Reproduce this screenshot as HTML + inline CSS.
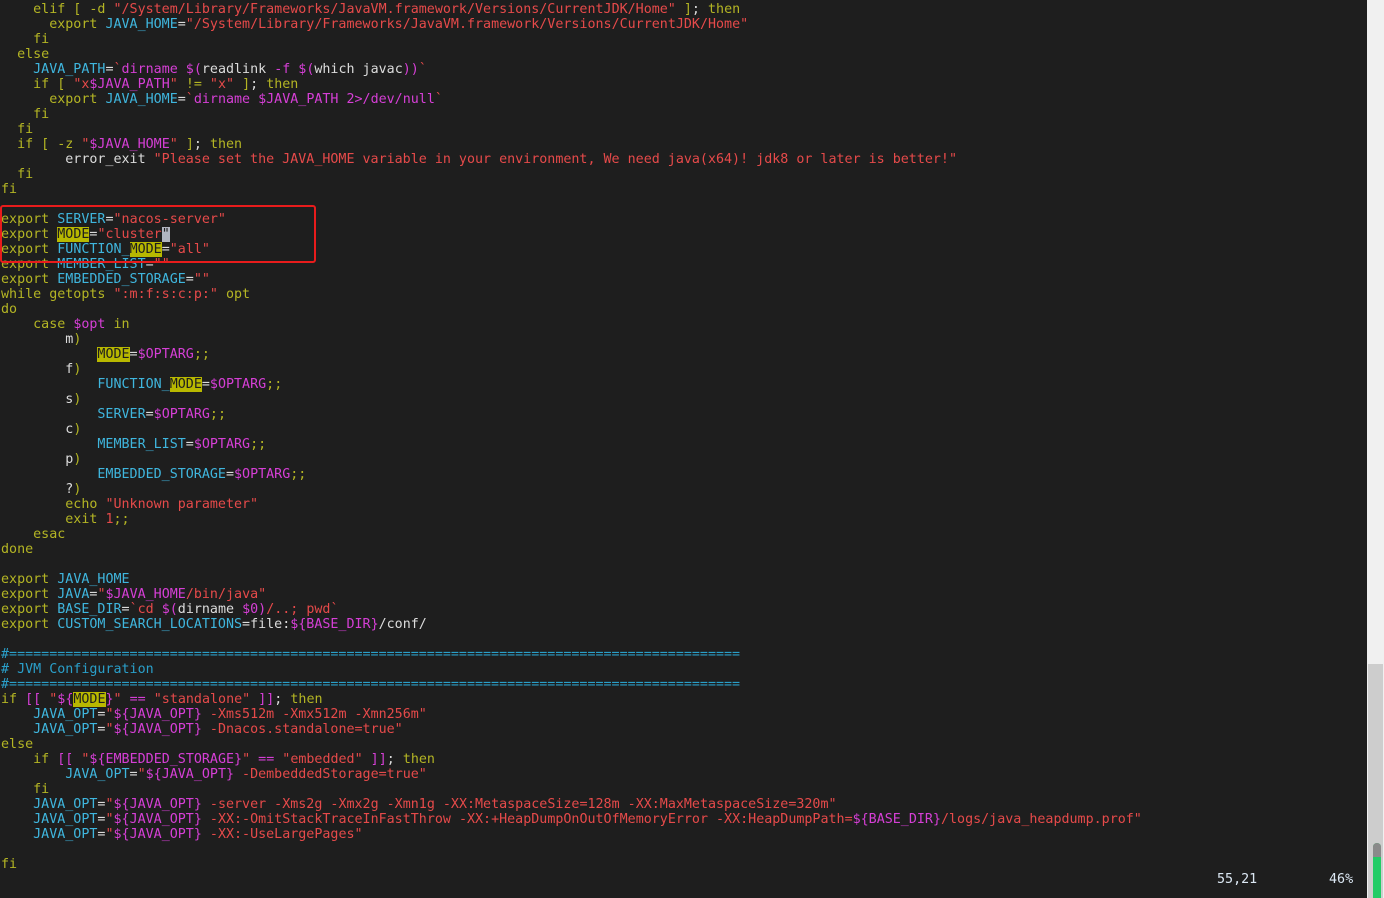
<!DOCTYPE html>
<html><head><meta charset="utf-8">
<style>
html,body{margin:0;padding:0;background:#1e1e1e;width:1384px;height:898px;overflow:hidden}
pre{margin:0;position:absolute;left:1px;top:2px;font-family:"DejaVu Sans Mono","Liberation Mono",monospace;font-size:13.35px;line-height:15px;color:#dcdcdc;white-space:pre}
.k{color:#b4b524}.v{color:#3fb6de}.s{color:#e64a4a}.m{color:#d63fd6}.c{color:#2a9fc9}
.h{background:#b8b800;color:#1e1e1e}
.cur{background:#b0b4c0;color:#1e1e1e}
#box{position:absolute;left:0;top:205px;width:312px;height:54px;border:2px solid #e81c1c;border-radius:3px}
#sb{position:absolute;left:1367px;top:0;width:17px;height:898px;background:#f0f0f0}
#sb2{position:absolute;left:1368px;top:664px;width:15px;height:234px;background:#cdcdcd}
#th{position:absolute;left:1373px;top:843px;width:8px;height:55px;background:#22cc66;border-radius:4px 4px 0 0}
#th2{position:absolute;left:1373px;top:843px;width:8px;height:14px;background:#8a8a8a;border-radius:4px 4px 0 0}
.st{position:absolute;top:872px;font-family:"DejaVu Sans Mono","Liberation Mono",monospace;font-size:13.35px;line-height:15px;color:#dce8f4}
</style></head><body>
<pre><span class="k">    elif [ -d </span><span class="s">"/System/Library/Frameworks/JavaVM.framework/Versions/CurrentJDK/Home"</span><span class="k"> ]</span>; <span class="k">then</span>
<span class="k">      export </span><span class="v">JAVA_HOME</span>=<span class="s">"/System/Library/Frameworks/JavaVM.framework/Versions/CurrentJDK/Home"</span>
<span class="k">    fi</span>
<span class="k">  else</span>
<span class="v">    JAVA_PATH</span>=<span class="s">`</span><span class="m">dirname $(</span>readlink <span class="m">-f $(</span>which javac<span class="m">))</span><span class="s">`</span>
<span class="k">    if [ </span><span class="s">"x</span><span class="m">$JAVA_PATH</span><span class="s">"</span><span class="k"> != </span><span class="s">"x"</span><span class="k"> ]</span>; <span class="k">then</span>
<span class="k">      export </span><span class="v">JAVA_HOME</span>=<span class="s">`</span><span class="m">dirname $JAVA_PATH 2&gt;/dev/null</span><span class="s">`</span>
<span class="k">    fi</span>
<span class="k">  fi</span>
<span class="k">  if [ -z </span><span class="s">"</span><span class="m">$JAVA_HOME</span><span class="s">"</span><span class="k"> ]</span>; <span class="k">then</span>
        error_exit <span class="s">"Please set the JAVA_HOME variable in your environment, We need java(x64)! jdk8 or later is better!"</span>
<span class="k">  fi</span>
<span class="k">fi</span>

<span class="k">export </span><span class="v">SERVER</span>=<span class="s">"nacos-server"</span>
<span class="k">export </span><span class="h">MODE</span>=<span class="s">"cluster</span><span class="cur">"</span>
<span class="k">export </span><span class="v">FUNCTION_</span><span class="h">MODE</span>=<span class="s">"all"</span>
<span class="k">export </span><span class="v">MEMBER_LIST</span>=<span class="s">""</span>
<span class="k">export </span><span class="v">EMBEDDED_STORAGE</span>=<span class="s">""</span>
<span class="k">while getopts </span><span class="s">":m:f:s:c:p:"</span><span class="k"> opt</span>
<span class="k">do</span>
<span class="k">    case </span><span class="m">$opt</span><span class="k"> in</span>
        m<span class="k">)</span>
            <span class="h">MODE</span>=<span class="m">$OPTARG</span><span class="k">;;</span>
        f<span class="k">)</span>
<span class="v">            FUNCTION_</span><span class="h">MODE</span>=<span class="m">$OPTARG</span><span class="k">;;</span>
        s<span class="k">)</span>
<span class="v">            SERVER</span>=<span class="m">$OPTARG</span><span class="k">;;</span>
        c<span class="k">)</span>
<span class="v">            MEMBER_LIST</span>=<span class="m">$OPTARG</span><span class="k">;;</span>
        p<span class="k">)</span>
<span class="v">            EMBEDDED_STORAGE</span>=<span class="m">$OPTARG</span><span class="k">;;</span>
        ?<span class="k">)</span>
<span class="k">        echo </span><span class="s">"Unknown parameter"</span>
<span class="k">        exit </span><span class="s">1</span><span class="k">;;</span>
<span class="k">    esac</span>
<span class="k">done</span>

<span class="k">export </span><span class="v">JAVA_HOME</span>
<span class="k">export </span><span class="v">JAVA</span>=<span class="s">"</span><span class="m">$JAVA_HOME</span><span class="s">/bin/java"</span>
<span class="k">export </span><span class="v">BASE_DIR</span>=<span class="s">`cd </span><span class="m">$(</span>dirname <span class="m">$0)</span><span class="s">/..; pwd`</span>
<span class="k">export </span><span class="v">CUSTOM_SEARCH_LOCATIONS</span>=file:<span class="m">${BASE_DIR}</span>/conf/

<span class="c">#===========================================================================================</span>
<span class="c"># JVM Configuration</span>
<span class="c">#===========================================================================================</span>
<span class="k">if </span><span class="m">[[</span> <span class="s">"</span><span class="m">${</span><span class="h">MODE</span><span class="m">}</span><span class="s">"</span> <span class="m">==</span> <span class="s">"standalone"</span> <span class="m">]]</span>; <span class="k">then</span>
<span class="v">    JAVA_OPT</span>=<span class="s">"</span><span class="m">${JAVA_OPT}</span><span class="s"> -Xms512m -Xmx512m -Xmn256m"</span>
<span class="v">    JAVA_OPT</span>=<span class="s">"</span><span class="m">${JAVA_OPT}</span><span class="s"> -Dnacos.standalone=true"</span>
<span class="k">else</span>
<span class="k">    if </span><span class="m">[[</span> <span class="s">"</span><span class="m">${EMBEDDED_STORAGE}</span><span class="s">"</span> <span class="m">==</span> <span class="s">"embedded"</span> <span class="m">]]</span>; <span class="k">then</span>
<span class="v">        JAVA_OPT</span>=<span class="s">"</span><span class="m">${JAVA_OPT}</span><span class="s"> -DembeddedStorage=true"</span>
<span class="k">    fi</span>
<span class="v">    JAVA_OPT</span>=<span class="s">"</span><span class="m">${JAVA_OPT}</span><span class="s"> -server -Xms2g -Xmx2g -Xmn1g -XX:MetaspaceSize=128m -XX:MaxMetaspaceSize=320m"</span>
<span class="v">    JAVA_OPT</span>=<span class="s">"</span><span class="m">${JAVA_OPT}</span><span class="s"> -XX:-OmitStackTraceInFastThrow -XX:+HeapDumpOnOutOfMemoryError -XX:HeapDumpPath=</span><span class="m">${BASE_DIR}</span><span class="s">/logs/java_heapdump.prof"</span>
<span class="v">    JAVA_OPT</span>=<span class="s">"</span><span class="m">${JAVA_OPT}</span><span class="s"> -XX:-UseLargePages"</span>

<span class="k">fi</span>
</pre>
<div id="box"></div>
<div class="st" style="left:1217px">55,21</div>
<div class="st" style="left:1329px">46%</div>
<div id="sb"></div><div id="sb2"></div><div id="th"></div><div id="th2"></div>
</body></html>
